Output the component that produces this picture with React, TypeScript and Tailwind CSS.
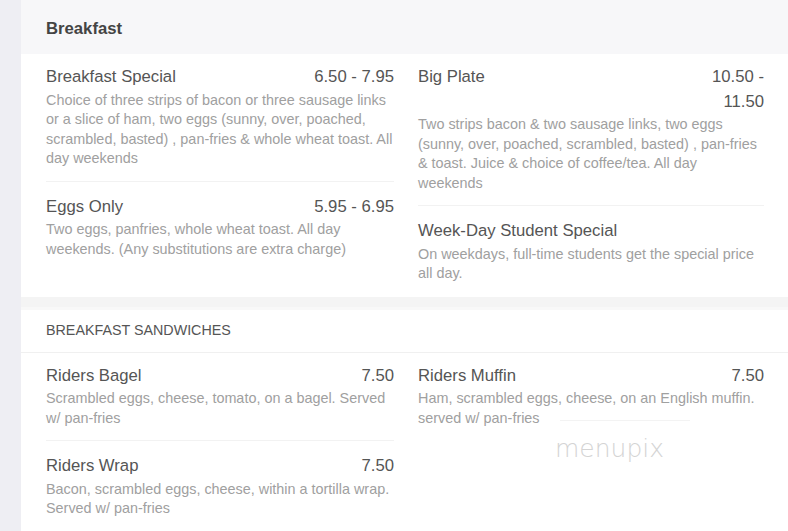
type Item = {
  name: string;
  price?: string;
  desc: string;
};

const breakfastLeft: Item[] = [
  {
    name: "Breakfast Special",
    price: "6.50 - 7.95",
    desc: "Choice of three strips of bacon or three sausage links or a slice of ham, two eggs (sunny, over, poached, scrambled, basted) , pan-fries & whole wheat toast. All day weekends",
  },
  {
    name: "Eggs Only",
    price: "5.95 - 6.95",
    desc: "Two eggs, panfries, whole wheat toast. All day weekends. (Any substitutions are extra charge)",
  },
];

const breakfastRight: Item[] = [
  {
    name: "Big Plate",
    price: "10.50 - 11.50",
    desc: "Two strips bacon & two sausage links, two eggs (sunny, over, poached, scrambled, basted) , pan-fries & toast. Juice & choice of coffee/tea. All day weekends",
  },
  {
    name: "Week-Day Student Special",
    desc: "On weekdays, full-time students get the special price all day.",
  },
];

const sandwichLeft: Item[] = [
  {
    name: "Riders Bagel",
    price: "7.50",
    desc: "Scrambled eggs, cheese, tomato, on a bagel. Served w/ pan-fries",
  },
  {
    name: "Riders Wrap",
    price: "7.50",
    desc: "Bacon, scrambled eggs, cheese, within a tortilla wrap. Served w/ pan-fries",
  },
];

const sandwichRight: Item[] = [
  {
    name: "Riders Muffin",
    price: "7.50",
    desc: "Ham, scrambled eggs, cheese, on an English muffin. served w/ pan-fries",
  },
];

function MenuItem({ item, first }: { item: Item; first: boolean }) {
  return (
    <div className={first ? "pt-[11px] pb-[12px]" : "pt-[13px] pb-[12px] border-t border-[#f2f2f2]"}>
      <div className="flex items-start justify-between gap-3 text-[16.7px] leading-[24.5px] text-[#555]">
        <span>{item.name}</span>
        {item.price && <span className="max-w-[90px] shrink-0 text-right">{item.price}</span>}
      </div>
      <p className="mt-[1px] text-[14.4px] leading-[19.5px] text-[#a0a0a0]">{item.desc}</p>
    </div>
  );
}

function Column({ items }: { items: Item[] }) {
  return (
    <div className="flex flex-col">
      {items.map((item, i) => (
        <MenuItem key={item.name} item={item} first={i === 0} />
      ))}
    </div>
  );
}

export default function App() {
  return (
    <div className="h-[531px] w-[788px] overflow-hidden bg-[#eeeef3] pl-[21px] font-['Liberation_Sans',Arial,sans-serif]">
      <div className="relative h-full bg-white">
        <div className="flex h-[54px] items-center bg-[#f7f7f9] px-[25px] pt-[3px] text-[16.7px] font-bold text-[#444]">
          Breakfast
        </div>
        <div className="grid grid-cols-[348px_346px] gap-x-[24px] pb-[1px] pl-[25px]">
          <Column items={breakfastLeft} />
          <Column items={breakfastRight} />
        </div>
        <div className="h-[10px] bg-[#f4f4f4]" />
        <div className="h-[3px] bg-[#f8f8f8]" />
        <div className="flex h-[43px] items-center border-b border-[#f0f0f0] px-[25px] text-[14.3px] uppercase text-[#555]">
          Breakfast Sandwiches
        </div>
        <div className="grid grid-cols-[348px_346px] gap-x-[24px] border-b border-[#f0f0f0] pl-[25px]">
          <Column items={sandwichLeft} />
          <Column items={sandwichRight} />
        </div>
        <div className="absolute left-[539px] top-[420px] h-px w-[130px] bg-[#f3f3f3]" />
        <div className="absolute left-[534px] top-[430px] font-['DejaVu_Sans',sans-serif] text-[25px] font-[200] text-[#d4d4d4]">
          menupix
        </div>
      </div>
    </div>
  );
}
